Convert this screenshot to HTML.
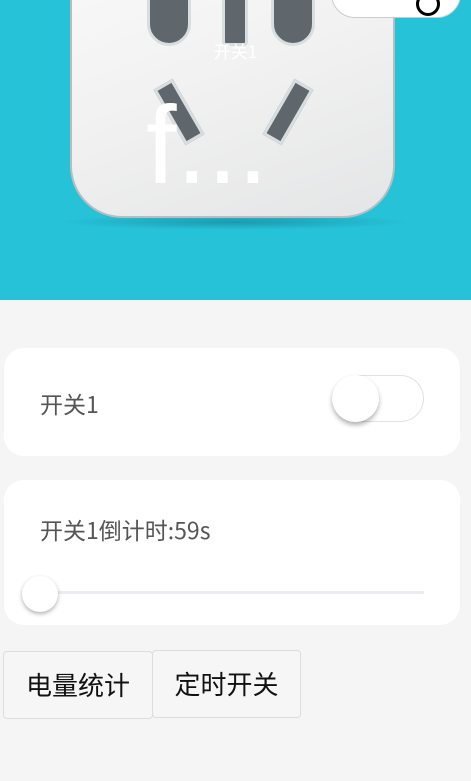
<!DOCTYPE html>
<html><head><meta charset="utf-8"><style>
*{margin:0;padding:0;box-sizing:border-box}
body{width:471px;height:781px;background:#f5f5f5;font-family:"Noto Sans CJK SC","Liberation Sans",sans-serif;position:relative;overflow:hidden}
.top{position:absolute;left:0;top:0;width:471px;height:300px;background:#26c2d8;overflow:hidden}
.plate{position:absolute;left:70px;top:-60px;width:325px;height:278px;border-radius:0 0 52px 52px;background:linear-gradient(160deg,#fafafa 0%,#f1f1f1 50%,#e4e5e6 100%);border:2px solid #b9bcc0;border-top:none}
.shadow{position:absolute;left:60px;top:214px;width:350px;height:16px;border-radius:50%;background:radial-gradient(ellipse,rgba(20,120,140,.55),rgba(38,194,216,0) 70%)}
.hole{position:absolute;background:#5f666c;border:3px solid #d8dde0}
.pill{position:absolute;left:331px;top:-30px;width:130px;height:48px;border-radius:24px;background:#fff;border:1px solid #ccc}
.card{position:absolute;left:4px;width:456px;background:#fff;border-radius:20px}
.lbl{position:absolute;left:36px;font-size:23px;color:#555;line-height:30px}
.btn{position:absolute;background:#f6f6f6;border:1px solid #ddd;border-radius:4px;font-size:26px;color:#111;text-align:center;line-height:66px}
</style></head><body>
<div class="top">
  <div class="shadow"></div>
  <div class="plate"></div>
  <div class="hole" style="left:147px;top:-20px;width:44px;height:66px;border-radius:0 0 22px 22px"></div>
  <div class="hole" style="left:222px;top:-10px;width:26px;height:56px;border-radius:0 0 4px 4px"></div>
  <div class="hole" style="left:271px;top:-20px;width:44px;height:66px;border-radius:0 0 22px 22px"></div>
  <div class="hole" style="left:168px;top:80px;width:22px;height:64px;transform:rotate(-30deg)"></div>
  <div class="hole" style="left:277px;top:80px;width:22px;height:64px;transform:rotate(30deg)"></div>
  <div style="position:absolute;left:0;width:471px;top:39px;text-align:center;color:#fff;font-size:17px;line-height:24px">开关1</div>
  <div style="position:absolute;left:146px;top:80px;height:103px;overflow:hidden;color:#fff;font-family:'Liberation Sans',sans-serif;font-size:110px;line-height:132px;white-space:nowrap">f...</div>
  <div class="pill"></div>
  <div style="position:absolute;left:416px;top:-8px;width:24px;height:24px;border:3px solid #000;border-radius:50%"></div>
</div>
<div class="card" style="top:348px;height:108px">
  <div class="lbl" style="top:40px">开关1</div>
  <div style="position:absolute;left:328px;top:27px;width:92px;height:47px;border:1px solid #e2e2e2;border-radius:24px;background:#fff"></div>
  <div style="position:absolute;left:328px;top:27px;width:47px;height:47px;border-radius:50%;background:#fff;box-shadow:0 3px 5px rgba(0,0,0,.3)"></div>
</div>
<div class="card" style="top:480px;height:145px">
  <div class="lbl" style="top:34px">开关1倒计时:59s</div>
  <div style="position:absolute;left:18px;top:111px;width:402px;height:3px;background:#ebedf2"></div>
  <div style="position:absolute;left:18px;top:96px;width:36px;height:36px;border-radius:50%;background:#fff;box-shadow:0 2px 4px rgba(0,0,0,.3)"></div>
</div>
<div class="btn" style="left:3px;top:651px;width:150px;height:68px">电量统计</div>
<div class="btn" style="left:152px;top:650px;width:149px;height:68px">定时开关</div>
</body></html>
